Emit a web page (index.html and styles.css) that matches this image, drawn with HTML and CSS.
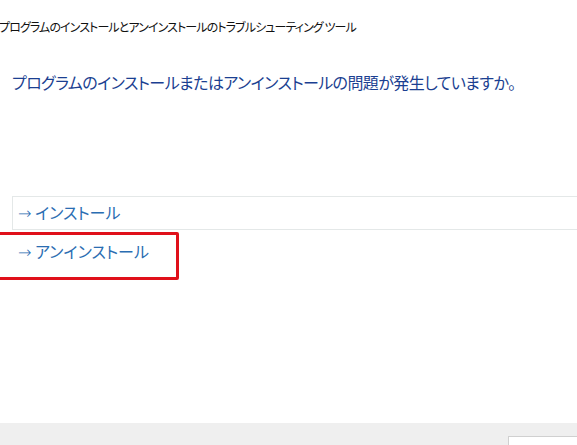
FILE: index.html
```html
<!DOCTYPE html>
<html lang="ja">
<head>
    <meta charset="utf-8">
    <title>トラブルシューティング ツール</title>
    <link rel="stylesheet" href="styles.css">
</head>
<body>

    <div class="wizard">
        <div class="wizard__title">プログラムのインストールとアンインストールのトラブルシューティング&nbsp;ツール</div>

        <div class="wizard__body">
            <h1 class="wizard__question">プログラムのインストールまたはアンインストールの問題が発生していますか。</h1>

            <ul class="choices">
                <li class="choices__item">
                    <span class="choices__arrow">&rarr;</span> インストール
                </li>
                <li class="choices__item choices__item--marked">
                    <span class="choices__arrow">&rarr;</span> アンインストール
                </li>
            </ul>
        </div>

        <div class="wizard__footer">
            <button class="wizard__button">キャンセル</button>
        </div>
    </div>

</body>
</html>
```

FILE: styles.css
```css
* {
    box-sizing: border-box;
}

body {
    margin: 0;
    padding: 0;
    background-color: #fff;
    font-family: "Noto Sans CJK JP", "Noto Sans", sans-serif;
    font-feature-settings: "palt";
    overflow: hidden;
}

.wizard {
    display: flex;
    flex-direction: column;
    height: 445px;
}

.wizard__title {
    color: #111;
    font-size: 12px;
    line-height: 16px;
    letter-spacing: -0.9px;
    padding-top: 19px;
    margin-left: -1px;
    white-space: nowrap;
}

.wizard__body {
    padding-left: 12px;
}

.wizard__question {
    color: #1b3f91;
    font-size: 16px;
    font-weight: normal;
    line-height: 22px;
    letter-spacing: -0.58px;
    margin: 36px 0 0;
    white-space: nowrap;
}

.choices {
    list-style-type: none;
    margin: 103px 0 0;
    padding: 0;
}

.choices__item {
    color: #2a6db2;
    font-size: 16px;
    line-height: 20px;
    height: 34px;
    padding: 5px 5px;
    width: 600px;
    border: 1px solid #e4e8e8;
    border-right: 0;
    white-space: nowrap;
}

.choices__arrow {
    font-family: "DejaVu Sans", sans-serif;
    font-size: 16px;
    font-weight: 300;
    line-height: 1;
}

.choices__item--marked {
    width: 182px;
    height: 48px;
    margin: 2px 0 0 -15px;
    padding: 6px 8px 0 18px;
    border: 3px solid #e0101a;
    border-radius: 2px;
}

.wizard__footer {
    margin-top: auto;
    height: 22px;
    background-color: #efefef;
    position: relative;
}

.wizard__button {
    position: absolute;
    left: 508px;
    top: 13px;
    width: 90px;
    height: 24px;
    background-color: #fff;
    border: 1px solid #d0d0d0;
    font-family: inherit;
    font-size: 12px;
    text-align: left;
    padding: 2px 0 0 8px;
}
```
